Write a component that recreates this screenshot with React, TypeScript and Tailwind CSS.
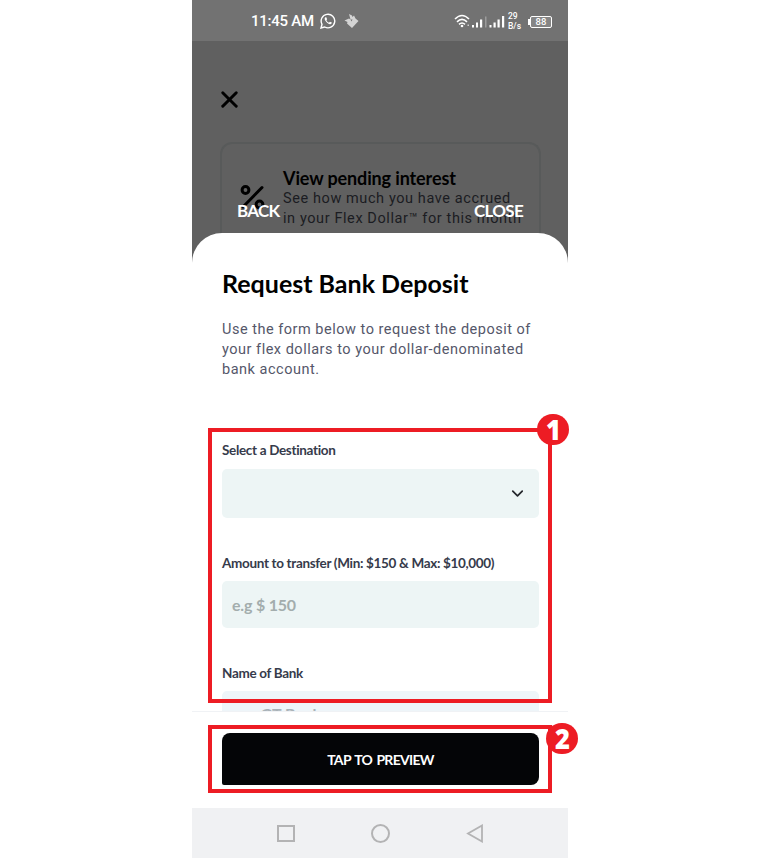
import React from 'react';
import { ChevronDown, X } from 'lucide-react';

function StatusBar() {
  return (
    <div className="flex h-[41px] items-center bg-[#727272] pl-[59px] pr-4 text-white">
      <span className="w-[64px] whitespace-nowrap pt-[2px] font-['Roboto'] text-[15px] font-medium tracking-[-0.250px]">11:45 AM</span>
      {/* WhatsApp */}
      <svg className="ml-[5px] h-4 w-4" viewBox="0 0 16 16" fill="none">
        <path d="M1 15l1-3.7A6.8 6.8 0 1 1 4.700 14z" stroke="white" strokeWidth="1.400" />
        <path d="M5.300 4.300c-.9.7-.8 2.200.3 3.800 1.400 2.100 3.500 3.400 4.900 3.100 1-.3 1.500-.9 1.300-1.600L9.900 8.700l-.9 1C7.800 9.200 6.900 8.300 6.400 7.200l.7-.9-.8-2z" fill="white" />
      </svg>
      <svg className="ml-[8px] h-4 w-[15px]" viewBox="0 0 15 16">
        <path d="M5 1l3 1.500.5 1.500L10 2.500l1.500 3 3 2.500-6.500 7-5-4.500.5-1.500L.5 7.500 5 5.500l1.500 1z" fill="#d4d4d4" />
        <path d="M6.500 6.500h2L7.500 8.500z" fill="#727272" />
      </svg>
      <div className="flex-1" />
      <svg className="h-[14px] w-[52px]" viewBox="0 0 52 14" fill="none">
        <g stroke="white" strokeWidth="1.600">
          <path d="M1 5Q8-2 15 5" />
          <path d="M3 7.800Q8 3 13 7.800" />
          <path d="M5 10.300Q8 7.700 11 10.300" />
        </g>
        <circle cx="8" cy="12" r="1.300" fill="white" />
        <path d="M13.500 10.500h1.500v1.500h-1.500z" fill="#ccc" />
        <path d="M18 11h2v2.500h-2zM22 8.500h2v5h-2zM26 5.500h2.200v8H26z" fill="white" />
        <path d="M31 2.500h1.500v11H31z" fill="#9b9b9b" />
        <path d="M35.500 11h2v2.500h-2zM39.500 8.500h2.200v5h-2.200zM43.500 5.500h2.200v8h-2.200zM48 2h2.200v11.500H48z" fill="white" />
      </svg>
      <div className="ml-[2px] flex w-[14px] flex-col font-['Roboto'] text-[8.500px] font-medium leading-[10px]">
        <span>29</span>
        <span>B/s</span>
      </div>
      <div className="ml-[6px] mt-[2px] flex items-center">
        <div className="h-[6px] w-[2px] bg-white" />
        <div className="flex h-3 w-[22px] items-center justify-center rounded-[2px] border-[1.500px] border-white bg-[#858585] pt-px font-['Roboto'] text-[9.500px] font-medium leading-none">
          88
        </div>
      </div>
    </div>
  );
}

function PendingInterestCard() {
  return (
    <div className="ml-7 flex h-[92px] w-[321px] rounded-t-[12px] border-2 border-b-0 border-[#585a5a] pl-[18px] pt-[24px]">
      <svg className="mt-[16px] h-[26px] w-[25px] shrink-0" viewBox="0 0 25 26" fill="none" stroke="black" strokeWidth="3" strokeLinecap="round">
        <circle cx="5.500" cy="6" r="3.400" />
        <circle cx="19.500" cy="20.500" r="3.400" />
        <path d="M22 3.500L3 23" />
      </svg>
      <div className="ml-[18px] whitespace-nowrap">
        <h2 className="font-['Lato'] text-[18px] font-bold leading-[20px] tracking-[-0.120px] text-black">View pending interest</h2>
        <p className="mt-px font-['Roboto'] text-[14.500px] leading-[20px] tracking-[0.590px] text-[#1b1c22]">
          See how much you have accrued
          <br />
          in your Flex Dollar™ for this month
        </p>
      </div>
    </div>
  );
}

function FieldLabel({ children }: { children: React.ReactNode }) {
  return (
    <label className="block whitespace-nowrap font-['Lato'] text-[13.500px] font-bold leading-[16px] tracking-[-0.330px] text-[#363b4b] [font-variant-ligatures:none]">
      {children}
    </label>
  );
}

function StepBadge({ step, className }: { step: number; className: string }) {
  return (
    <div className={`absolute flex h-[31px] w-8 items-center justify-center rounded-full bg-[#ed1c24] font-['Open_Sans'] text-[29px] font-extrabold leading-none text-white ${className}`}>
      <span className="-mt-[3px] scale-x-[0.88]">{step}</span>
    </div>
  );
}

export default function App() {
  return (
    <div className="h-[858px] w-[760px] overflow-hidden bg-white">
      <div className="relative ml-48 flex h-[858px] w-[376px] flex-col bg-[#606060]">
        <StatusBar />
        <div className="h-[101px] pl-[24px] pt-[45px]">
          <X className="h-[27px] w-[27px] text-black" strokeWidth={2.6} />
        </div>
        <PendingInterestCard />

        {/* Sheet controls sit on top of the dimmed page */}
        <div className="absolute left-[45px] top-[201px] flex w-[286px] justify-between font-['Lato'] text-[17px] font-bold leading-[20px] tracking-[-0.700px] text-white">
          <span>BACK</span>
          <span>CLOSE</span>
        </div>

        <div className="-mt-px flex min-h-0 flex-1 flex-col overflow-hidden rounded-t-[30px] bg-white">
          <div className="h-[479px] shrink-0 overflow-hidden border-b border-[#f0f2f5] px-[30px] pt-[35px]">
            <h1 className="whitespace-nowrap font-['Lato'] text-[25px] font-bold leading-[30px] text-black">Request Bank Deposit</h1>
            <p className="mt-[22px] whitespace-nowrap font-['Roboto'] text-[14.500px] leading-[20px] tracking-[0.510px] text-[#55576a]">
              Use the form below to request the deposit of
              <br />
              your flex dollars to your dollar-denominated
              <br />
              bank account.
            </p>
            <div className="mt-[62px]">
              <FieldLabel>Select a Destination</FieldLabel>
              <div className="mt-[11px] flex h-[49px] w-[317px] items-center justify-end rounded-[5px] bg-[#edf5f5] pr-[12px]">
                <ChevronDown className="h-[19px] w-[19px] text-[#24272c]" strokeWidth={2.2} />
              </div>
            </div>
            <div className="mt-[37px]">
              <FieldLabel>Amount to transfer (Min: $150 &amp; Max: $10,000)</FieldLabel>
              <div className="mt-[10px] flex h-[47px] w-[317px] items-center rounded-[5px] bg-[#edf5f5] pl-[10px] pt-px font-['Lato'] text-[16px] font-bold tracking-[-0.200px] text-[#a3adad]">
                e.g $ 150
              </div>
            </div>
            <div className="mt-[37px]">
              <FieldLabel>Name of Bank</FieldLabel>
              <div className="mt-[10px] h-[47px] w-[317px] whitespace-nowrap rounded-t-[5px] bg-[#eef5f9] pl-[10px] pt-[13px] font-['Lato'] text-[16px] font-bold leading-[20px] text-[#a9b2b8]">
                e.g. GT Bank
              </div>
            </div>
          </div>
          <div className="h-[96px] shrink-0 pl-[30px] pt-[21px]">
            <button className="flex h-[52px] w-[317px] items-center justify-center rounded-[8px] rounded-bl-[2px] bg-[#040507] font-['Lato'] text-[14px] font-bold tracking-[-0.700px] text-white [word-spacing:1.500px]">
              TAP TO PREVIEW
            </button>
          </div>
          <div className="flex h-[50px] shrink-0 items-center justify-between bg-[#f0f1f3] pl-[85px] pr-[84px]">
            <div className="h-[17px] w-[18px] border-2 border-[#b3b3b4]" />
            <div className="h-[19px] w-[19px] rounded-full border-2 border-[#b3b3b4]" />
            <svg className="h-[19px] w-[18px]" viewBox="0 0 18 19" fill="none">
              <path d="M16 1.500v16L2 9.500z" stroke="#b3b3b4" strokeWidth="1.800" />
            </svg>
          </div>
        </div>

        {/* Step callouts */}
        <div className="absolute left-4 top-[428px] h-[275px] w-[344px] border-4 border-[#ed1c24]" />
        <div className="absolute left-4 top-[725px] h-[68px] w-[344px] border-4 border-[#ed1c24]" />
        <StepBadge step={1} className="left-[345px] top-[414px]" />
        <StepBadge step={2} className="left-[354px] top-[723px]" />
      </div>
    </div>
  );
}
